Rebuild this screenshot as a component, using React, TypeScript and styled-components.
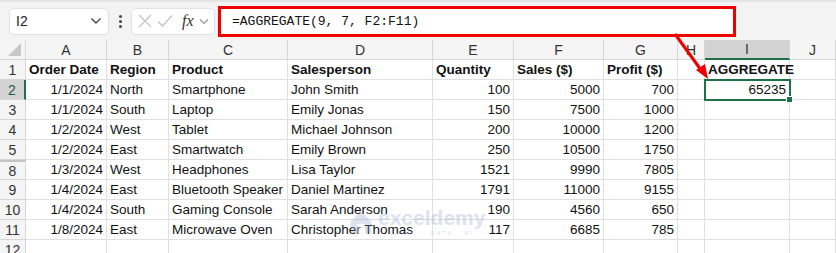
import React from "react";
import styled, { createGlobalStyle } from "styled-components";

const GlobalStyle = createGlobalStyle`
  html, body {
    margin: 0;
    padding: 0;
    background: #ffffff;
  }
  body {
    font-family: "Liberation Sans", Arial, sans-serif;
  }
`;

const COLS = [
  { key: "A", w: 81 },
  { key: "B", w: 62 },
  { key: "C", w: 119 },
  { key: "D", w: 145 },
  { key: "E", w: 81 },
  { key: "F", w: 90 },
  { key: "G", w: 74 },
  { key: "H", w: 27 },
  { key: "I", w: 85 },
  { key: "J", w: 46 },
];

const headers = ["Order Date", "Region", "Product", "Salesperson", "Quantity", "Sales ($)", "Profit ($)"];

const rows: { n: number; data: (string | number)[] }[] = [
  { n: 2, data: ["1/1/2024", "North", "Smartphone", "John Smith", 100, 5000, 700] },
  { n: 3, data: ["1/1/2024", "South", "Laptop", "Emily Jonas", 150, 7500, 1000] },
  { n: 4, data: ["1/2/2024", "West", "Tablet", "Michael Johnson", 200, 10000, 1200] },
  { n: 5, data: ["1/2/2024", "East", "Smartwatch", "Emily Brown", 250, 10500, 1750] },
  { n: 8, data: ["1/3/2024", "West", "Headphones", "Lisa Taylor", 1521, 9990, 7805] },
  { n: 9, data: ["1/4/2024", "East", "Bluetooth Speaker", "Daniel Martinez", 1791, 11000, 9155] },
  { n: 10, data: ["1/4/2024", "South", "Gaming Console", "Sarah Anderson", 190, 4560, 650] },
  { n: 11, data: ["1/8/2024", "East", "Microwave Oven", "Christopher Thomas", 117, 6685, 785] },
];

const Page = styled.div`
  position: relative;
  width: 836px;
  height: 253px;
  overflow: hidden;
  background: #ffffff;
`;

const Toolbar = styled.div`
  height: 40px;
  box-sizing: border-box;
  background: #f3f3f3;
  border-top: 2px solid #e4e4e4;
  display: flex;
  align-items: center;
  padding: 0 0 0 9px;
`;

const NameBox = styled.div`
  width: 100px;
  height: 27px;
  box-sizing: border-box;
  background: #ffffff;
  border: 1px solid #e2e2e2;
  border-radius: 5px;
  display: flex;
  align-items: center;
  justify-content: space-between;
  padding: 0 6px 0 6px;
  font-size: 14px;
  color: #222;
`;

const Dots = styled.div`
  width: 22px;
  display: flex;
  flex-direction: column;
  align-items: center;
  gap: 2px;
  span {
    width: 3px;
    height: 3px;
    border-radius: 50%;
    background: #444;
  }
`;

const FnBox = styled.div`
  width: 84px;
  height: 27px;
  box-sizing: border-box;
  background: #ffffff;
  border: 1px solid #e2e2e2;
  border-radius: 5px;
  display: flex;
  align-items: center;
  padding: 0 4px 0 6px;
  gap: 5px;
`;

const Fx = styled.span`
  font-family: "Liberation Serif", "Times New Roman", serif;
  font-style: italic;
  font-size: 16px;
  color: #333;
  margin-left: 4px;
`;

const FormulaBar = styled.div`
  margin-left: 3px;
  width: 518px;
  height: 31px;
  box-sizing: border-box;
  background: #ffffff;
  border: 3px solid #ee0000;
  display: flex;
  align-items: center;
  padding-left: 11px;
  font-family: "Liberation Mono", "Courier New", monospace;
  font-size: 13px;
  color: #111;
`;

const Sheet = styled.div`
  display: grid;
  grid-template-columns: 26px ${COLS.map((c) => `${c.w}px`).join(" ")};
  grid-auto-rows: 20px;
  font-size: 13.5px;
  color: #111;
`;

const Corner = styled.div`
  background: #f5f5f5;
  border-right: 1px solid #d6d6d6;
  border-bottom: 1px solid #d6d6d6;
  box-sizing: border-box;
  position: relative;
  &::after {
    content: "";
    position: absolute;
    right: 4px;
    bottom: 3px;
    width: 0;
    height: 0;
    border-left: 13px solid transparent;
    border-bottom: 13px solid #c8c8c8;
  }
`;

const ColHead = styled.div<{ $active?: boolean }>`
  box-sizing: border-box;
  background: ${({ $active }) => ($active ? "#d3d3d3" : "#f5f5f5")};
  border-right: 1px solid #d6d6d6;
  border-bottom: ${({ $active }) => ($active ? "2px solid #1e7145" : "1px solid #d6d6d6")};
  display: flex;
  align-items: center;
  justify-content: center;
  font-size: 14px;
  color: #333;
`;

const RowHead = styled.div<{ $active?: boolean; $gap?: boolean }>`
  box-sizing: border-box;
  background: ${({ $active }) => ($active ? "#d3d3d3" : "#f5f5f5")};
  border-right: ${({ $active }) => ($active ? "2px solid #1e7145" : "1px solid #d6d6d6")};
  border-bottom: 1px solid #d6d6d6;
  border-top: ${({ $gap }) => ($gap ? "2px solid #c4c4c4" : "none")};
  display: flex;
  align-items: center;
  justify-content: center;
  font-size: 14px;
  color: ${({ $active }) => ($active ? "#1e5c3a" : "#333")};
`;

const Cell = styled.div<{ $num?: boolean; $bold?: boolean; $selected?: boolean }>`
  position: relative;
  box-sizing: border-box;
  border-right: 1px solid #e0e0e0;
  border-bottom: 1px solid #e0e0e0;
  display: flex;
  align-items: center;
  justify-content: ${({ $num }) => ($num ? "flex-end" : "flex-start")};
  padding: 0 3px;
  white-space: nowrap;
  font-weight: ${({ $bold }) => ($bold ? 700 : 400)};
  ${({ $selected }) =>
    $selected &&
    `
    outline: 2px solid #1e7145;
    outline-offset: -1px;
    z-index: 2;
  `}
`;

const FillHandle = styled.span`
  position: absolute;
  right: -4px;
  bottom: -4px;
  width: 5px;
  height: 5px;
  background: #1e7145;
  border: 1px solid #fff;
`;

const Arrow = styled.svg`
  position: absolute;
  left: 0;
  top: 0;
  pointer-events: none;
  z-index: 5;
`;

const Watermark = styled.div`
  position: absolute;
  left: 347px;
  top: 207px;
  display: flex;
  align-items: center;
  gap: 3px;
  opacity: 0.3;
  pointer-events: none;
  z-index: 3;
`;

const WmText = styled.div`
  display: flex;
  flex-direction: column;
  line-height: 1;
  color: #8ea3cc;
  b {
    font-size: 21px;
    font-weight: 700;
  }
  span {
    font-size: 6px;
    letter-spacing: 2px;
    margin-top: 2px;
    text-align: center;
  }
`;

const Chevron = () => (
  <svg width="12" height="8" viewBox="0 0 12 8">
    <path d="M1.5 1.5 L6 6 L10.5 1.5" fill="none" stroke="#444" strokeWidth="1.4" />
  </svg>
);

export default function App() {
  return (
    <Page>
      <GlobalStyle />
      <Toolbar>
        <NameBox>
          <span>I2</span>
          <Chevron />
        </NameBox>
        <Dots>
          <span />
          <span />
          <span />
        </Dots>
        <FnBox>
          <svg width="14" height="14" viewBox="0 0 14 14">
            <path d="M1 1 L13 13 M13 1 L1 13" stroke="#c4c4c4" strokeWidth="1.3" fill="none" />
          </svg>
          <svg width="16" height="14" viewBox="0 0 16 14">
            <path d="M1 7.5 L5.5 12 L15 1.5" stroke="#c4c4c4" strokeWidth="1.3" fill="none" />
          </svg>
          <Fx>fx</Fx>
          <svg width="10" height="7" viewBox="0 0 10 7">
            <path d="M1 1.5 L5 5.5 L9 1.5" fill="none" stroke="#999" strokeWidth="1.2" />
          </svg>
        </FnBox>
        <FormulaBar>=AGGREGATE(9, 7, F2:F11)</FormulaBar>
      </Toolbar>

      <Sheet>
        <Corner />
        {COLS.map((c) => (
          <ColHead key={c.key} $active={c.key === "I"}>
            {c.key}
          </ColHead>
        ))}

        <RowHead>1</RowHead>
        {headers.map((h) => (
          <Cell key={h} $bold>
            {h}
          </Cell>
        ))}
        <Cell />
        <Cell $bold>AGGREGATE</Cell>
        <Cell />

        {rows.map((r) => (
          <React.Fragment key={r.n}>
            <RowHead $active={r.n === 2} $gap={r.n === 8}>
              {r.n}
            </RowHead>
            {r.data.map((v, i) => (
              <Cell key={i} $num={i === 0 || typeof v === "number"}>
                {v}
              </Cell>
            ))}
            <Cell />
            <Cell $num $selected={r.n === 2}>
              {r.n === 2 ? "65235" : ""}
              {r.n === 2 && <FillHandle />}
            </Cell>
            <Cell />
          </React.Fragment>
        ))}

        <RowHead>12</RowHead>
        {COLS.map((c) => (
          <Cell key={c.key} />
        ))}
      </Sheet>

      <Watermark>
        <svg width="28" height="28" viewBox="0 0 30 30">
          <path d="M4 14 L15 4 L26 14 L26 27 L4 27 Z" fill="#8ea3cc" />
          <path d="M11 27 L11 17 L19 17 L19 27 Z" fill="#ffffff" />
        </svg>
        <WmText>
          <b>exceldemy</b>
          <span>EXCEL · DATA · BI</span>
        </WmText>
      </Watermark>

      <Arrow width="836" height="253" viewBox="0 0 836 253">
        <line x1="675" y1="34" x2="701" y2="70" stroke="#ee0000" strokeWidth="3" />
        <path d="M708 79 L696 70 L705 64 Z" fill="#ee0000" />
      </Arrow>
    </Page>
  );
}
